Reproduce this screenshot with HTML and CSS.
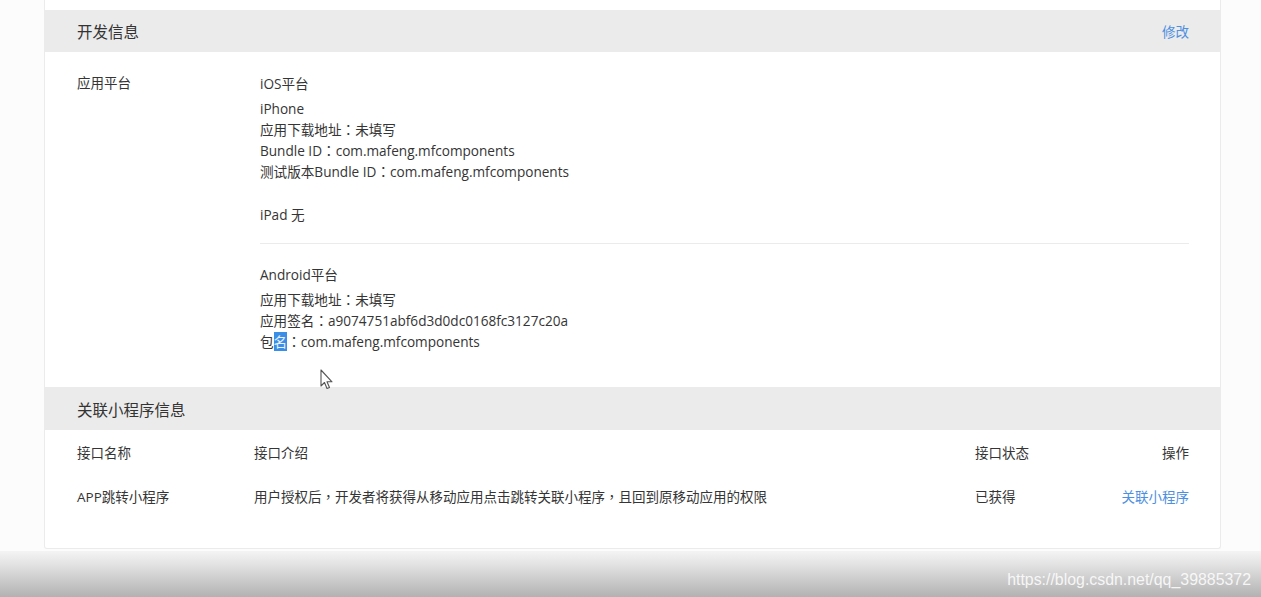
FILE: index.html
```html
<!DOCTYPE html>
<html lang="zh-CN">
<head>
<meta charset="utf-8">
<title>开发信息</title>
<link rel="stylesheet" href="styles.css">
</head>
<body>
<div class="page">
  <div class="card">
    <div class="prev"></div>
    <div class="sec-head">
      <span class="sec-title">开发信息</span>
      <a class="link">修改</a>
    </div>
    <div class="dev-body">
      <div class="label">应用平台</div>
      <div class="platforms">
        <div class="group">
          <div class="g-title">iOS平台</div>
          <div class="line">iPhone</div>
          <div class="line">应用下载地址<span class="colon">：</span>未填写</div>
          <div class="line">Bundle ID<span class="colon">：</span>com.mafeng.mfcomponents</div>
          <div class="line">测试版本Bundle ID<span class="colon">：</span>com.mafeng.mfcomponents</div>
          <div class="line ipad">iPad 无</div>
        </div>
        <div class="sep"></div>
        <div class="group">
          <div class="g-title">Android平台</div>
          <div class="line">应用下载地址<span class="colon">：</span>未填写</div>
          <div class="line">应用签名<span class="colon">：</span>a9074751abf6d3d0dc0168fc3127c20a</div>
          <div class="line">包<span class="sel">名</span><span class="colon">：</span>com.mafeng.mfcomponents</div>
        </div>
      </div>
    </div>
    <div class="sec-head sec-head-2">
      <span class="sec-title">关联小程序信息</span>
    </div>
    <div class="table">
      <div class="row head">
        <div>接口名称</div>
        <div>接口介绍</div>
        <div>接口状态</div>
        <div class="op">操作</div>
      </div>
      <div class="row">
        <div>APP跳转小程序</div>
        <div>用户授权后<span class="colon">，</span>开发者将获得从移动应用点击跳转关联小程序<span class="colon">，</span>且回到原移动应用的权限</div>
        <div>已获得</div>
        <div class="op"><a class="link">关联小程序</a></div>
      </div>
    </div>
  </div>
  <div class="shade"><span class="wm">https://blog.csdn.net/qq_39885372</span></div>
  <svg class="cursor" width="14" height="22" viewBox="0 0 14 22"><path d="M1 1 L1 17 L4.5 13.5 L7 19.5 L9.5 18.5 L7 12.8 L12 12.8 Z" fill="#fff" stroke="#555" stroke-width="1.1" stroke-linejoin="round"/></svg>
</div>
</body>
</html>
```
FILE: styles.css
```css
html, body {
  margin: 0;
  padding: 0;
  background: #fff;
}
body {
  font-family: "Open Sans", "Noto Sans CJK SC", sans-serif;
  color: #353535;
  overflow: hidden;
}
.page {
  position: relative;
  width: 1261px;
  height: 597px;
  display: flex;
  flex-direction: column;
  background: #fcfcfc;
}
.card {
  margin-left: 44px;
  width: 1175px;
  background: #fff;
  border: 1px solid #ebebeb;
  border-top: none;
  border-radius: 0 0 3px 3px;
}
.prev {
  height: 10px;
}
.sec-head {
  height: 42px;
  background: #ebebeb;
  display: flex;
  align-items: center;
  justify-content: space-between;
  padding: 0 31px 0 32px;
}
.sec-head-2 {
  height: 43px;
}
.sec-title {
  font-family: "Noto Sans CJK SC", sans-serif;
  font-size: 15.5px;
  color: #333;
}
.link {
  color: #4d8fe0;
  font-size: 13.5px;
  cursor: pointer;
}
.colon {
  font-family: "Noto Sans CJK TC", sans-serif;
  font-feature-settings: "locl" 0;
}
.dev-body {
  display: flex;
  padding: 21px 31px 35px 32px;
}
.label {
  width: 183px;
  font-size: 13.5px;
  line-height: 21px;
}
.platforms {
  flex: 1;
  font-size: 13.6px;
}
.g-title {
  line-height: 21px;
  margin-bottom: 4px;
}
.line {
  line-height: 21px;
}
.ipad {
  margin-top: 22px;
}
.sep {
  height: 1px;
  background: #ebebeb;
  margin: 18px 0 20px;
}
.sel {
  background: #3a8ee6;
  color: #e8f1ff;
}
.table {
  padding: 0 31px 30px 32px;
  font-size: 13.5px;
}
.row {
  display: grid;
  grid-template-columns: 177px 721px 1fr auto;
  height: 44px;
  align-items: center;
}
.op {
  text-align: right;
}
.shade {
  flex: 1;
  margin-top: 2px;
  background: linear-gradient(#f4f4f4, #e2e2e2 30%, #b2b2b2);
  display: flex;
  justify-content: flex-end;
  align-items: center;
  padding-right: 10px;
  padding-top: 12px;
}
.wm {
  font-family: "Liberation Sans", sans-serif;
  font-size: 15.9px;
  color: rgba(255, 255, 255, 0.85);
}
.cursor {
  position: absolute;
  left: 320px;
  top: 369px;
}
```
